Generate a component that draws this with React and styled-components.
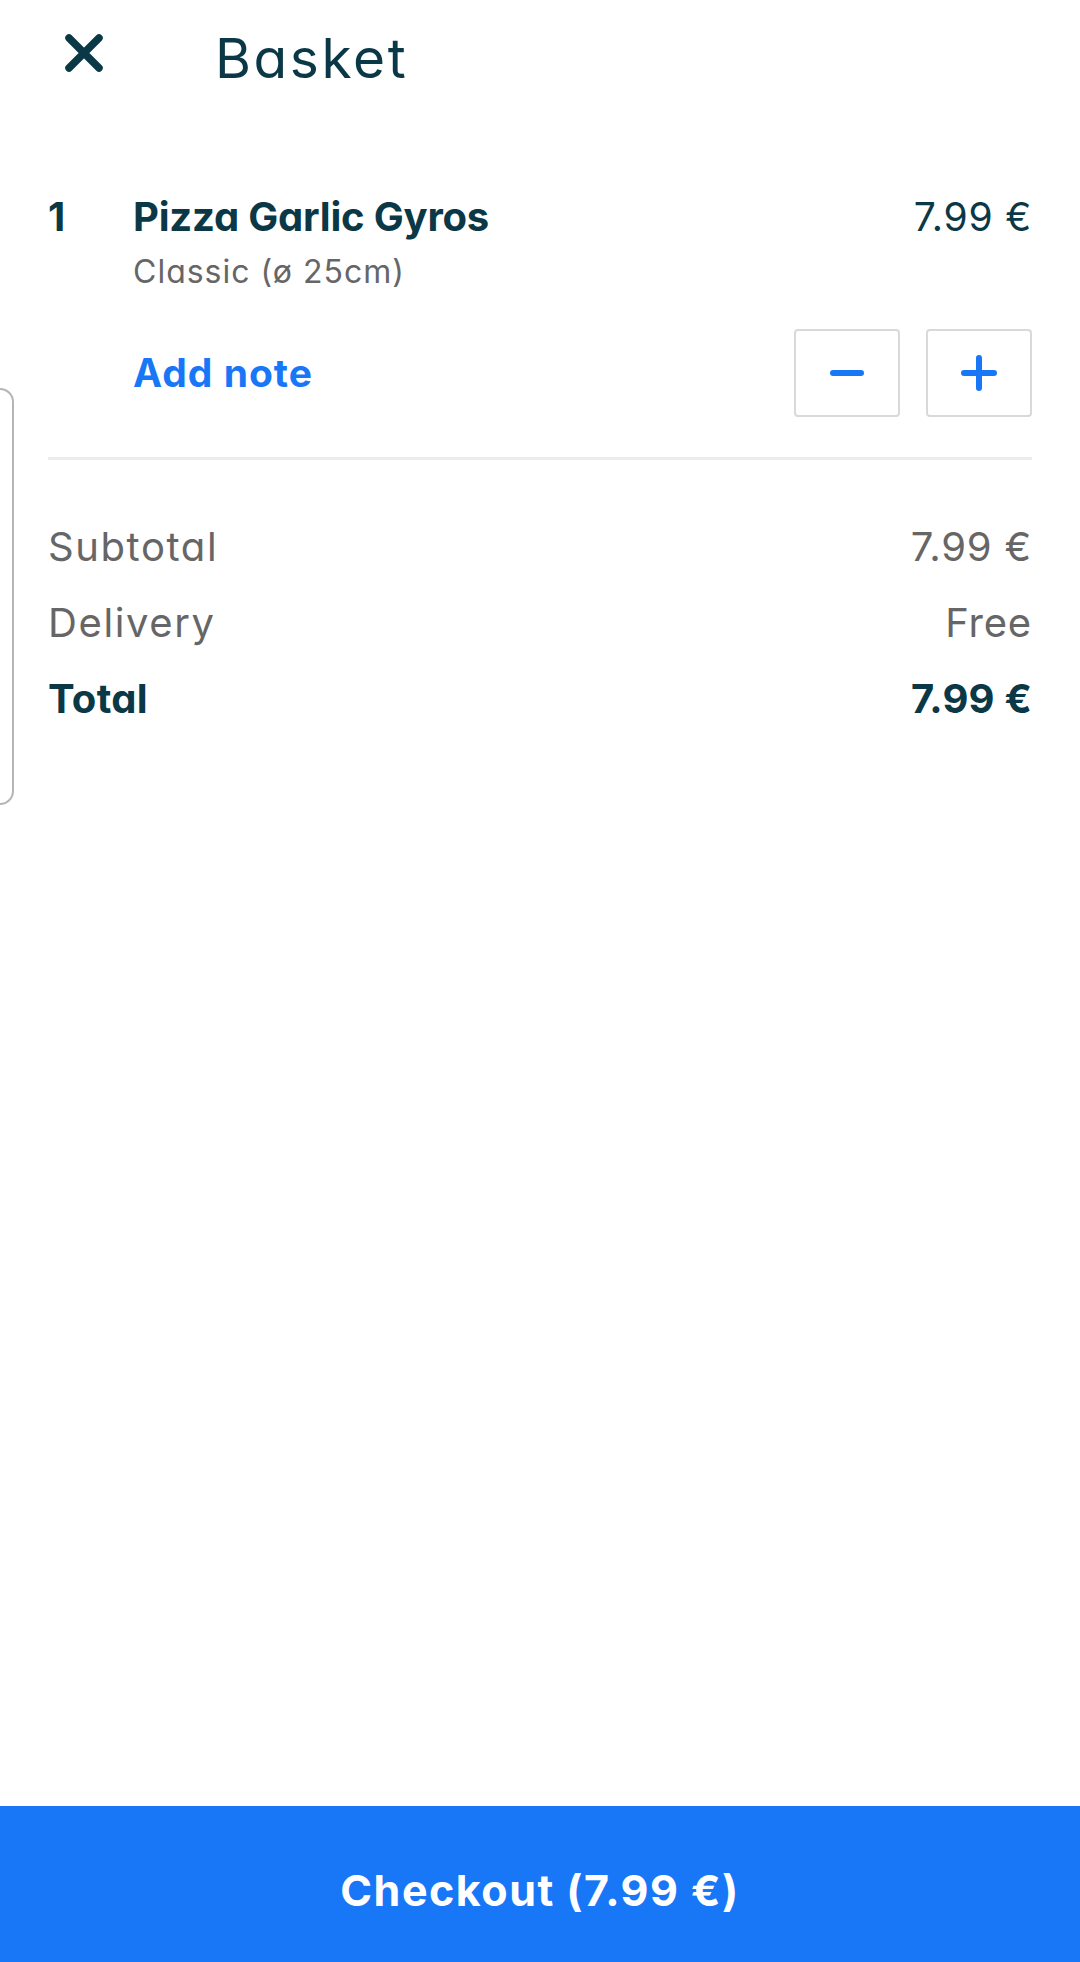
import styled, { createGlobalStyle } from "styled-components";

const GlobalStyle = createGlobalStyle`
  html, body {
    margin: 0;
    padding: 0;
    background: #ffffff;
  }
  body {
    font-family: Inter, "Open Sans", "Noto Sans", sans-serif;
    font-feature-settings: "cv11";
    -webkit-font-smoothing: antialiased;
  }
  * { box-sizing: border-box; }
`;

const NAVY = "#0b3846";
const GREY = "#666666";
const BLUE = "#1877f6";

const Page = styled.div`
  position: relative;
  width: 1080px;
  min-height: 1962px;
  display: flex;
  flex-direction: column;
  overflow: hidden;
`;

const Header = styled.header`
  height: 114px;
  padding: 2px 0 0 65px;
  display: flex;
  align-items: center;
`;

const CloseButton = styled.button`
  width: 38px;
  height: 38px;
  padding: 0;
  border: 0;
  background: none;
  display: flex;
  margin-top: -11px;
  cursor: pointer;
`;

const Title = styled.h1`
  margin: 0 0 0 112px;
  font-size: 55px;
  line-height: 110px;
  font-weight: 400;
  color: ${NAVY};
  letter-spacing: 2.6px;
`;

const Item = styled.section`
  padding: 79px 48px 0 48px;
  display: grid;
  grid-template-columns: 85px 1fr auto;
`;

const Qty = styled.span`
  font-size: 40px;
  line-height: 48px;
  font-weight: 700;
  color: ${NAVY};
`;

const Details = styled.div`
  display: flex;
  flex-direction: column;
`;

const Name = styled.span`
  font-size: 40px;
  line-height: 48px;
  font-weight: 700;
  color: ${NAVY};
  letter-spacing: -0.2px;
`;

const Variant = styled.span`
  margin-top: 11px;
  font-size: 32px;
  line-height: 40px;
  color: ${GREY};
  letter-spacing: 1px;
`;

const Price = styled.span`
  font-size: 39px;
  line-height: 48px;
  color: ${NAVY};
  text-align: right;
  letter-spacing: 0.8px;
`;

const Controls = styled.div`
  grid-column: 2 / 4;
  margin-top: 37px;
  display: flex;
  align-items: center;
  justify-content: space-between;
`;

const NoteLink = styled.a`
  font-size: 39px;
  line-height: 48px;
  font-weight: 700;
  color: ${BLUE};
  text-decoration: none;
  letter-spacing: 1px;
  cursor: pointer;
`;

const Stepper = styled.div`
  display: flex;
  gap: 26px;
`;

const StepButton = styled.button`
  width: 106px;
  height: 88px;
  padding: 0;
  border: 2px solid #d9d9d9;
  border-radius: 4px;
  background: #ffffff;
  display: flex;
  align-items: center;
  justify-content: center;
  cursor: pointer;
`;

const Divider = styled.hr`
  margin: 40px 48px 0;
  border: 0;
  height: 3px;
  background: #ececec;
`;

const Summary = styled.div`
  padding: 49px 48px 0 48px;
  display: flex;
  flex-direction: column;
`;

const SummaryRow = styled.div`
  display: flex;
  justify-content: space-between;
  font-size: 40px;
  line-height: 76px;
  font-weight: ${(p) => (p.$strong ? 700 : 400)};
  color: ${(p) => (p.$strong ? NAVY : GREY)};
`;

const RowLabel = styled.span`
  letter-spacing: ${(p) => (p.$strong ? "0.3px" : "1.6px")};
`;

const RowValue = styled.span`
  letter-spacing: ${(p) => (p.$strong ? "0.2px" : "0.8px")};
`;

const Spacer = styled.div`
  flex: 1;
`;

const CheckoutBar = styled.button`
  height: 156px;
  width: 100%;
  border: 0;
  background: ${BLUE};
  color: #ffffff;
  font-family: inherit;
  font-feature-settings: "cv11";
  font-size: 43px;
  font-weight: 700;
  letter-spacing: 1.5px;
  padding-top: 12px;
  cursor: pointer;
`;

const DrawerHandle = styled.div`
  position: absolute;
  left: -20px;
  top: 388px;
  width: 34px;
  height: 417px;
  border: 2px solid #b5b5b5;
  border-radius: 14px;
`;

const CloseIcon = () => (
  <svg width="38" height="38" viewBox="0 0 38 38">
    <path
      d="M4 4 L34 34 M34 4 L4 34"
      stroke={NAVY}
      strokeWidth="7.5"
      strokeLinecap="round"
    />
  </svg>
);

const MinusIcon = () => (
  <svg width="36" height="36" viewBox="0 0 36 36">
    <path d="M4 18 H32" stroke={BLUE} strokeWidth="6" strokeLinecap="round" />
  </svg>
);

const PlusIcon = () => (
  <svg width="38" height="38" viewBox="0 0 38 38">
    <path
      d="M4 19 H34 M19 4 V34"
      stroke={BLUE}
      strokeWidth="6"
      strokeLinecap="round"
    />
  </svg>
);

const totals = [
  { label: "Subtotal", value: "7.99 €" },
  { label: "Delivery", value: "Free" },
  { label: "Total", value: "7.99 €", strong: true },
];

export default function App() {
  return (
    <Page>
      <GlobalStyle />
      <DrawerHandle />
      <Header>
        <CloseButton aria-label="Close">
          <CloseIcon />
        </CloseButton>
        <Title>Basket</Title>
      </Header>

      <Item>
        <Qty>1</Qty>
        <Details>
          <Name>Pizza Garlic Gyros</Name>
          <Variant>Classic (ø 25cm)</Variant>
        </Details>
        <Price>7.99 €</Price>
        <Controls>
          <NoteLink>Add note</NoteLink>
          <Stepper>
            <StepButton aria-label="Remove one">
              <MinusIcon />
            </StepButton>
            <StepButton aria-label="Add one">
              <PlusIcon />
            </StepButton>
          </Stepper>
        </Controls>
      </Item>

      <Divider />

      <Summary>
        {totals.map((row) => (
          <SummaryRow key={row.label} $strong={row.strong}>
            <RowLabel $strong={row.strong}>{row.label}</RowLabel>
            <RowValue $strong={row.strong}>{row.value}</RowValue>
          </SummaryRow>
        ))}
      </Summary>

      <Spacer />
      <CheckoutBar>Checkout (7.99 €)</CheckoutBar>
    </Page>
  );
}
